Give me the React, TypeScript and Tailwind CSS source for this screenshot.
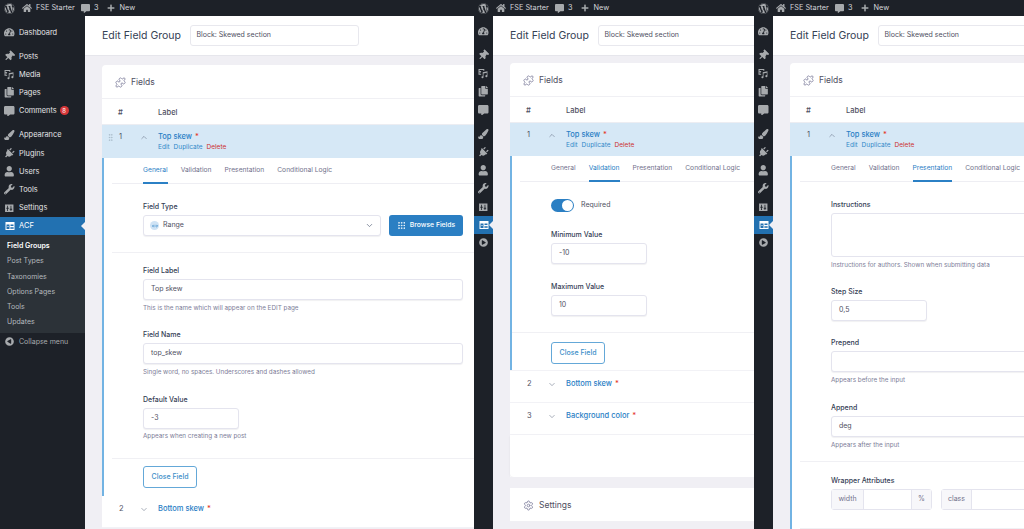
import React from "react";
import { ChevronDown, ChevronUp, GripVertical, Grip, Puzzle, Settings as Gear, MoveHorizontal } from "lucide-react";
import {
  FaWordpress, FaHome, FaCommentAlt, FaPlus, FaTachometerAlt, FaThumbtack, FaCopy,
  FaPaintBrush, FaPlug, FaUser, FaWrench, FaPlayCircle,
} from "react-icons/fa";

const font = "font-['Inter','Liberation_Sans',sans-serif]";

function SettingsIcon({ className }: { className?: string }) {
  return (
    <svg viewBox="0 0 20 20" className={className} fill="currentColor">
      <path fillRule="evenodd" d="M2 3h16v14H2z M6 5v4H4.500v2H6v4h1.500v-4H9V9H7.500V5z M12.500 5v6H11v2h1.500v2H14v-2h1.500v-2H14V5z" />
    </svg>
  );
}
function MediaIcon({ className }: { className?: string }) {
  return (
    <svg viewBox="0 0 20 20" className={className} fill="currentColor">
      <path fillRule="evenodd" d="M1 2h11v3h-2V4H3v7h3v2H1z M4.500 5.500a1.500 1.500 0 1 0 .01 0z" />
      <path d="M9 8l9-2v9.500a2 2 0 1 1-2-2c.3 0 .5 0 .7.100V9l-6.200 1.400v7.100a2 2 0 1 1-1.500-1.900z" />
    </svg>
  );
}
function AcfIcon({ className }: { className?: string }) {
  return (
    <svg viewBox="0 0 20 20" className={className} fill="currentColor">
      <path fillRule="evenodd" d="M1 2h18v16H1z M3 7v9h6V7z M11 7v3h6V7z M11 12v4h6v-4z" />
      <path d="M4 10h4v1H4zM12 13.500h4v1h-4z" />
    </svg>
  );
}
function Pin({ className }: { className?: string }) {
  return <FaThumbtack className={`${className} rotate-45`} />;
}
function Plug({ className }: { className?: string }) {
  return <FaPlug className={`${className} rotate-45`} />;
}

type IconT = React.ComponentType<{ className?: string }>;
const groups: { label: string; icon: IconT; badge?: string }[][] = [
  [{ label: "Dashboard", icon: FaTachometerAlt }],
  [
    { label: "Posts", icon: Pin },
    { label: "Media", icon: MediaIcon },
    { label: "Pages", icon: FaCopy },
    { label: "Comments", icon: FaCommentAlt, badge: "8" },
  ],
  [
    { label: "Appearance", icon: FaPaintBrush },
    { label: "Plugins", icon: Plug },
    { label: "Users", icon: FaUser },
    { label: "Tools", icon: FaWrench },
    { label: "Settings", icon: SettingsIcon },
  ],
];

function TopBar() {
  return (
    <div className="flex h-4 shrink-0 items-center bg-[#1d2128] pl-[4px] text-[7.300px] text-[#d5d6d9]">
      <FaWordpress className="h-[11px] w-[11px] text-[#a7aaad]" />
      <FaHome className="ml-[7px] h-[10px] w-[10px] text-[#a7aaad]" />
      <span className="ml-[4px] w-[37px] whitespace-nowrap">FSE Starter</span>
      <FaCommentAlt className="ml-[8px] h-[9px] w-[9px] text-[#a7aaad]" />
      <span className="ml-[4px]">3</span>
      <FaPlus className="ml-[8px] h-[8px] w-[8px] text-[#a7aaad]" />
      <span className="ml-[5px]">New</span>
    </div>
  );
}

function Sidebar({ wide }: { wide: boolean }) {
  const Row = ({ label, icon: Icon, badge }: { label: string; icon: IconT; badge?: string }) => (
    <div className={`flex h-[18.200px] items-center text-[7.400px] text-[#e4e5e7] ${wide ? "pl-[4px]" : "justify-center"}`}>
      <Icon className="h-[10.500px] w-[10.500px] shrink-0 text-[#a7aaad]" />
      {wide && <span className="ml-[4.500px] whitespace-nowrap">{label}</span>}
      {wide && badge && (
        <span className="ml-[3px] flex h-[9px] w-[9px] items-center justify-center rounded-full bg-[#d63638] text-[6px] text-white">
          {badge}
        </span>
      )}
    </div>
  );
  return (
    <div className={`flex shrink-0 flex-col bg-[#1d2128] ${wide ? "w-[85px] pt-[7px]" : "w-[19px] pt-[6px]"}`}>
      <div className="flex flex-col gap-[6px]">
        {groups.map((g, i) => (
          <div key={i} className="flex flex-col">
            {g.map((it) => (
              <Row key={it.label} {...it} />
            ))}
          </div>
        ))}
      </div>
      <div className={`relative flex h-[18px] items-center bg-[#2271b1] text-[7.500px] text-white ${wide ? "pl-[5px]" : "justify-center"}`}>
        <AcfIcon className="h-[10px] w-[10px] shrink-0" />
        {wide && <span className="ml-[4px]">ACF</span>}
        <span className="absolute right-0 top-[5px] h-0 w-0 border-y-[4px] border-r-[4px] border-y-transparent border-r-[#f0eff4]" />
      </div>
      {wide && (
        <div className="flex h-[98px] flex-col bg-[#2c3238] pb-[3px] pl-[7px] pt-[4px] text-[7px] text-[#b4b9be]">
          {["Field Groups", "Post Types", "Taxonomies", "Options Pages", "Tools", "Updates"].map((s, i) => (
            <div key={s} className={`flex h-[15.200px] items-center ${i === 0 ? "font-semibold text-white" : ""}`}>
              {s}
            </div>
          ))}
        </div>
      )}
      <div className={`flex h-[18px] items-center text-[7px] text-[#a7aaad] ${wide ? "pl-[5px]" : "justify-center"}`}>
        <FaPlayCircle className={`h-[9px] w-[9px] shrink-0 ${wide ? "rotate-180" : ""}`} />
        {wide && <span className="ml-[5px] whitespace-nowrap">Collapse menu</span>}
      </div>
    </div>
  );
}

function Header() {
  return (
    <div className="flex h-[40px] shrink-0 items-center border-b border-[#e6e6ec] bg-white pl-[17px]">
      <h1 className="w-[87.500px] shrink-0 whitespace-nowrap text-[10.500px] font-normal text-[#344054]">Edit Field Group</h1>
      <div className="flex h-[21px] w-[169px] shrink-0 items-center rounded-[3px] border border-[#e8e8ee] px-[6px] text-[7px] text-[#50505f]">
        Block: Skewed section
      </div>
    </div>
  );
}

function Lab({ children }: { children: React.ReactNode }) {
  return <div className="flex h-[9px] items-center text-[7px] font-medium text-[#344054]">{children}</div>;
}
function Hint({ children }: { children: React.ReactNode }) {
  return <div className="mt-[4px] flex h-[9px] items-center text-[6.300px] text-[#7d7d98]">{children}</div>;
}
function Input({ value, w }: { value?: string; w: string }) {
  return (
    <div className={`mt-[3px] flex h-[21px] items-center rounded-[3px] border border-[#e4e4ee] bg-white px-[7px] text-[7px] text-[#50505f] shadow-[0_1px_1px_rgba(16,24,40,0.06)] ${w}`}>
      {value}
    </div>
  );
}
function Divider({ className = "" }: { className?: string }) {
  return <div className={`h-px bg-[#f0f0f4] ${className}`} />;
}
function CloseBtn() {
  return (
    <div className="flex h-[22px] w-[54px] items-center justify-center rounded-[3px] border border-[#64a8d8] text-[7px] font-medium text-[#3d8fc9]">
      Close Field
    </div>
  );
}
function Tabs({ active }: { active: number }) {
  const tabs = ["General", "Validation", "Presentation", "Conditional Logic"];
  return (
    <div className="ml-[8px] flex h-[26px] gap-[13px] border-b border-[#eeeef3] pl-[31px]">
      {tabs.map((t, i) => (
        <div
          key={t}
          className={`flex h-[26px] items-center whitespace-nowrap border-b-[2px] pt-[1px] text-[6.700px] ${
            i === active ? "border-[#2b80c5] text-[#2b80c5]" : "border-transparent text-[#72728c]"
          }`}
        >
          {t}
        </div>
      ))}
    </div>
  );
}
function FieldRow({ n, title, open, grip }: { n: number; title: string; open?: boolean; grip?: boolean }) {
  if (open) {
    return (
      <div className="flex h-[33px] items-start bg-[#d6e8f6] pl-[6px] pt-[6px]">
        <div className="w-[11px] pt-[2px]">{grip && <GripVertical className="-ml-[2px] h-[9px] w-[9px] text-[#a3b4c2]" strokeWidth={1.5} />}</div>
        <div className="flex h-[12px] w-[19px] items-center text-[7.500px] text-[#50505f]">{n}</div>
        <ChevronUp className="mt-[2px] h-[9px] w-[12px] shrink-0 text-[#667085]" strokeWidth={1.5} />
        <div className="ml-[8px] flex flex-col">
          <div className="flex h-[12px] items-center text-[7.500px] font-medium text-[#2b80c5]">
            {title}
            <span className="ml-[3px] text-[#e5332a]">*</span>
          </div>
          <div className="flex h-[10px] items-center gap-[4px] text-[6.500px] text-[#3288c9]">
            <span>Edit</span>
            <span>Duplicate</span>
            <span className="text-[#cc2f2f]">Delete</span>
          </div>
        </div>
      </div>
    );
  }
  return (
    <div className="flex h-[32px] items-start border-b border-[#f2f2f6] bg-white pl-[6px] pt-[6.500px]">
      <div className="w-[11px]" />
      <div className="flex h-[12px] w-[19px] items-center text-[7.500px] text-[#50505f]">{n}</div>
      <ChevronDown className="mt-[2px] h-[9px] w-[12px] shrink-0 text-[#667085]" strokeWidth={1.5} />
      <div className="ml-[8px] flex h-[12px] items-center text-[7.500px] font-medium text-[#2b80c5]">
        {title}
        <span className="ml-[3px] text-[#e5332a]">*</span>
      </div>
    </div>
  );
}
function CardHead({ icon: Icon, title }: { icon: IconT; title: string }) {
  return (
    <div className="flex h-[34px] items-center gap-[5px] border-b border-[#f0f0f4] pl-[13px] pt-[2px] text-[8.500px] text-[#50505f]">
      <Icon className="h-[11px] w-[11px] text-[#8a8aa5]" />
      {title}
    </div>
  );
}
function TableHead() {
  return (
    <div className="flex h-[26px] items-center border-b border-[#ecedf2] pl-[16px] pt-[2px] text-[7.500px] font-medium text-[#50505f]">
      <span className="w-[40px]">#</span>
      <span>Label</span>
    </div>
  );
}

function GeneralBody() {
  return (
    <>
      <Tabs active={0} />
      <div className="h-[68px] pl-[39px] pt-[19px]">
        <Lab>Field Type</Lab>
        <div className="flex items-center">
          <div className="mt-[3px] flex h-[21px] w-[238px] items-center rounded-[3px] border border-[#e4e4ee] bg-white pl-[6px] pr-[6px] text-[7px] text-[#50505f] shadow-[0_1px_1px_rgba(16,24,40,0.06)]">
            <span className="mr-[4px] flex h-[9px] w-[9px] items-center justify-center rounded-full bg-[#cfe3f5]">
              <MoveHorizontal className="h-[6px] w-[6px] text-[#2b80c5]" />
            </span>
            Range
            <ChevronDown className="ml-auto h-[9px] w-[9px] text-[#667085]" />
          </div>
          <div className="ml-[8px] mt-[3px] flex h-[21px] w-[74px] items-center justify-center gap-[4px] rounded-[3px] bg-[#2b7fc3] text-[6.800px] font-medium text-white">
            <Grip className="h-[9px] w-[9px]" />
            Browse Fields
          </div>
        </div>
      </div>
      <Divider className="ml-[8px]" />
      <div className="pl-[39px] pt-[14px]">
        <Lab>Field Label</Lab>
        <Input value="Top skew" w="w-[320px]" />
        <Hint>This is the name which will appear on the EDIT page</Hint>
        <div className="mt-[18px]">
          <Lab>Field Name</Lab>
          <Input value="top_skew" w="w-[320px]" />
          <Hint>Single word, no spaces. Underscores and dashes allowed</Hint>
        </div>
        <div className="mt-[18.500px]">
          <Lab>Default Value</Lab>
          <Input value="-3" w="w-[96px]" />
          <Hint>Appears when creating a new post</Hint>
        </div>
      </div>
      <Divider className="ml-[8px] mt-[16.500px]" />
      <div className="pb-[8px] pl-[39px] pt-[7px]">
        <CloseBtn />
      </div>
    </>
  );
}

function ValidationBody() {
  return (
    <>
      <Tabs active={1} />
      <div className="pl-[39px] pt-[17px]">
        <div className="flex h-[13px] items-center">
          <span className="flex h-[13px] w-[23px] items-center justify-end rounded-full bg-[#2b7fc3] pr-[1px]">
            <span className="h-[11px] w-[11px] rounded-full bg-white" />
          </span>
          <span className="ml-[7px] text-[7px] text-[#50505f]">Required</span>
        </div>
        <div className="mt-[19px]">
          <Lab>Minimum Value</Lab>
          <Input value="-10" w="w-[96px]" />
        </div>
        <div className="mt-[19px]">
          <Lab>Maximum Value</Lab>
          <Input value="10" w="w-[96px]" />
        </div>
      </div>
      <Divider className="mt-[16px]" />
      <div className="pb-[6px] pl-[39px] pt-[9px]">
        <CloseBtn />
      </div>
    </>
  );
}

function PresentationBody() {
  return (
    <>
      <Tabs active={2} />
      <div className="pl-[39px] pt-[19px]">
        <Lab>Instructions</Lab>
        <div className="mt-[3px] h-[44px] w-[400px] rounded-[3px] border border-[#e4e4ee] bg-white" />
        <Hint>Instructions for authors. Shown when submitting data</Hint>
        <div className="mt-[18px]">
          <Lab>Step Size</Lab>
          <Input value="0,5" w="w-[96px]" />
        </div>
        <div className="mt-[18px]">
          <Lab>Prepend</Lab>
          <Input w="w-[400px]" />
          <Hint>Appears before the input</Hint>
        </div>
        <div className="mt-[19px]">
          <Lab>Append</Lab>
          <Input value="deg" w="w-[400px]" />
          <Hint>Appears after the input</Hint>
        </div>
      </div>
      <Divider className="ml-[8px] mt-[11px]" />
      <div className="pl-[39px] pt-[15px]">
        <Lab>Wrapper Attributes</Lab>
        <div className="mt-[3px] flex h-[21px] gap-[9px] text-[7px] text-[#72728c]">
          <div className="flex w-[101px] rounded-[3px] border border-[#e4e4ee]">
            <span className="flex w-[31px] items-center justify-center bg-[#f7f7fa]">width</span>
            <span className="flex-1 border-x border-[#e4e4ee]" />
            <span className="flex w-[19px] items-center justify-center bg-[#f7f7fa]">%</span>
          </div>
          <div className="flex w-[200px] rounded-[3px] border border-[#e4e4ee]">
            <span className="flex w-[30px] items-center justify-center border-r border-[#e4e4ee] bg-[#f7f7fa]">class</span>
          </div>
        </div>
      </div>
      <Divider className="ml-[8px] mt-[18px] mb-[20px]" />
    </>
  );
}

function Panel({ width, wide, mt, tab, children }: {
  width: string; wide: boolean; mt: string; tab: React.ReactNode; children?: React.ReactNode;
}) {
  return (
    <div className={`flex h-full shrink-0 flex-col overflow-hidden ${width}`}>
      <TopBar />
      <div className="flex min-h-0 flex-1">
        <Sidebar wide={wide} />
        <div className="flex min-w-0 flex-1 flex-col bg-[#f0eff4]">
          <Header />
          <div className={`ml-[17px] ${mt} w-[600px] shrink-0`}>
            <div className="rounded-t-[4px] bg-white">
              <CardHead icon={Puzzle} title="Fields" />
              <TableHead />
              <FieldRow n={1} title="Top skew" open grip={wide} />
              <div className="border-l-[2px] border-[#72b3e3]">{tab}</div>
              {children}
            </div>
          </div>
        </div>
      </div>
    </div>
  );
}

export default function App() {
  return (
    <div className={`flex h-[529px] w-[1024px] overflow-hidden bg-[#1d2128] ${font}`}>
      <Panel width="w-[474px]" wide mt="mt-[9px]" tab={<GeneralBody />}>
        <FieldRow n={2} title="Bottom skew" />
      </Panel>
      <Panel width="w-[280px]" wide={false} mt="mt-[7px]" tab={<ValidationBody />}>
        <div className="border-t border-[#f2f2f6]">
          <FieldRow n={2} title="Bottom skew" />
          <FieldRow n={3} title="Background color" />
          <div className="h-[42px] rounded-b-[4px] shadow-[0_1px_2px_rgba(16,24,40,0.08)]" />
        </div>
        <div className="h-[11px] bg-[#f0eff4]" />
        <div className="rounded-t-[4px] bg-white">
          <CardHead icon={Gear} title="Settings" />
        </div>
      </Panel>
      <Panel width="w-[270px]" wide={false} mt="mt-[7px]" tab={<PresentationBody />} />
    </div>
  );
}
